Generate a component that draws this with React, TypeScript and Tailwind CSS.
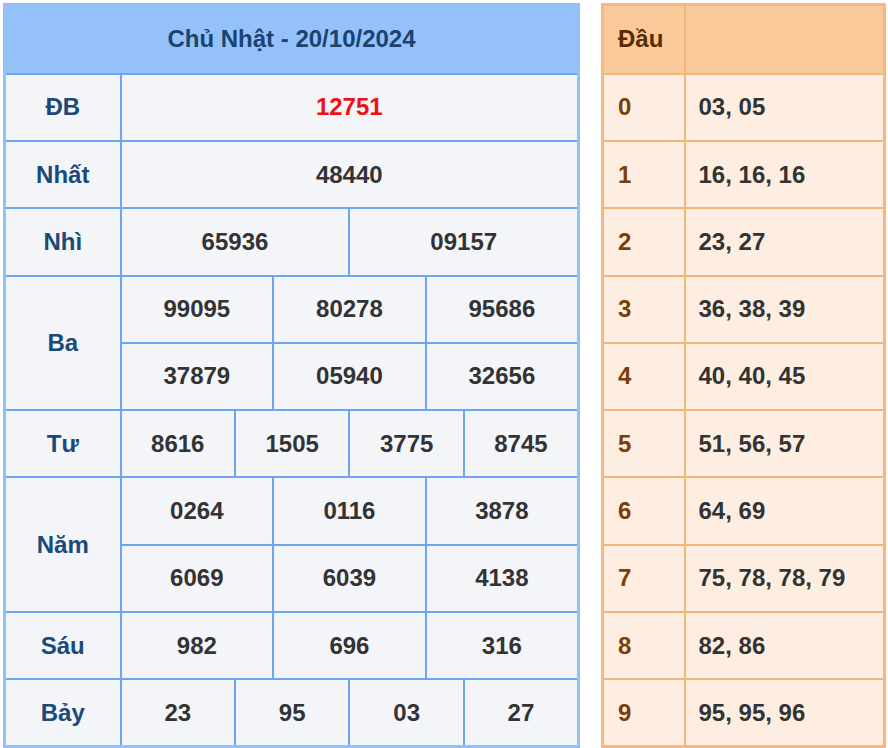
const rows: { label: string; cols: string[][] }[] = [
  { label: "ĐB", cols: [["12751"]] },
  { label: "Nhất", cols: [["48440"]] },
  { label: "Nhì", cols: [["65936", "09157"]] },
  { label: "Ba", cols: [["99095", "80278", "95686"], ["37879", "05940", "32656"]] },
  { label: "Tư", cols: [["8616", "1505", "3775", "8745"]] },
  { label: "Năm", cols: [["0264", "0116", "3878"], ["6069", "6039", "4138"]] },
  { label: "Sáu", cols: [["982", "696", "316"]] },
  { label: "Bảy", cols: [["23", "95", "03", "27"]] },
];

const heads = ["03, 05", "16, 16, 16", "23, 27", "36, 38, 39", "40, 40, 45", "51, 56, 57", "64, 69", "75, 78, 78, 79", "82, 86", "95, 95, 96"];

export default function App() {
  return (
    <div className="flex gap-[21px] pt-[3px] pl-[3px] bg-white w-[888px] h-[748px] font-[Liberation_Sans,Arial,sans-serif] font-bold text-[24px]">
      <table className="w-[577px] table-fixed border-collapse border-[3px] border-[#93c0f9] bg-[#f3f5f9] text-center">
        <colgroup>
          <col className="w-[116px]" />
          {Array.from({ length: 12 }).map((_, i) => (
            <col key={i} />
          ))}
        </colgroup>
        <tbody>
          <tr className="h-[68px]">
            <td colSpan={13} className="bg-[#95c1fb] text-[#1a4470] border-2 border-[#6ea6ef]">Chủ Nhật - 20/10/2024</td>
          </tr>
          {rows.map((r) =>
            r.cols.map((line, li) => (
              <tr key={r.label + li} className="h-[66px]">
                {li === 0 && (
                  <td rowSpan={r.cols.length} className="text-[#1a4a7a] border-2 border-[#6ea6ef]">{r.label}</td>
                )}
                {line.map((v, i) => (
                  <td key={i} colSpan={12 / line.length} className={`border-2 border-[#6ea6ef] ${v === "12751" ? "text-[#ee1111]" : "text-[#333]"}`}>{v}</td>
                ))}
              </tr>
            ))
          )}
        </tbody>
      </table>
      <table className="w-[285px] table-fixed border-collapse border-[3px] border-[#f5b880] bg-[#fdeee1] text-left">
        <colgroup>
          <col className="w-[82px]" />
          <col />
        </colgroup>
        <tbody>
          <tr className="h-[68px] bg-[#f9c99a]">
            <td className="pl-[14px] text-[#5a2c06] border-2 border-[#f4b57a]">Đầu</td>
            <td className="border-2 border-[#f4b57a]"></td>
          </tr>
          {heads.map((h, i) => (
            <tr key={i} className="h-[66px]">
              <td className="pl-[14px] text-[#7a3e08] border-2 border-[#f4b57a]">{i}</td>
              <td className="pl-[13px] text-[#333] border-2 border-[#f4b57a]">{h}</td>
            </tr>
          ))}
        </tbody>
      </table>
    </div>
  );
}
